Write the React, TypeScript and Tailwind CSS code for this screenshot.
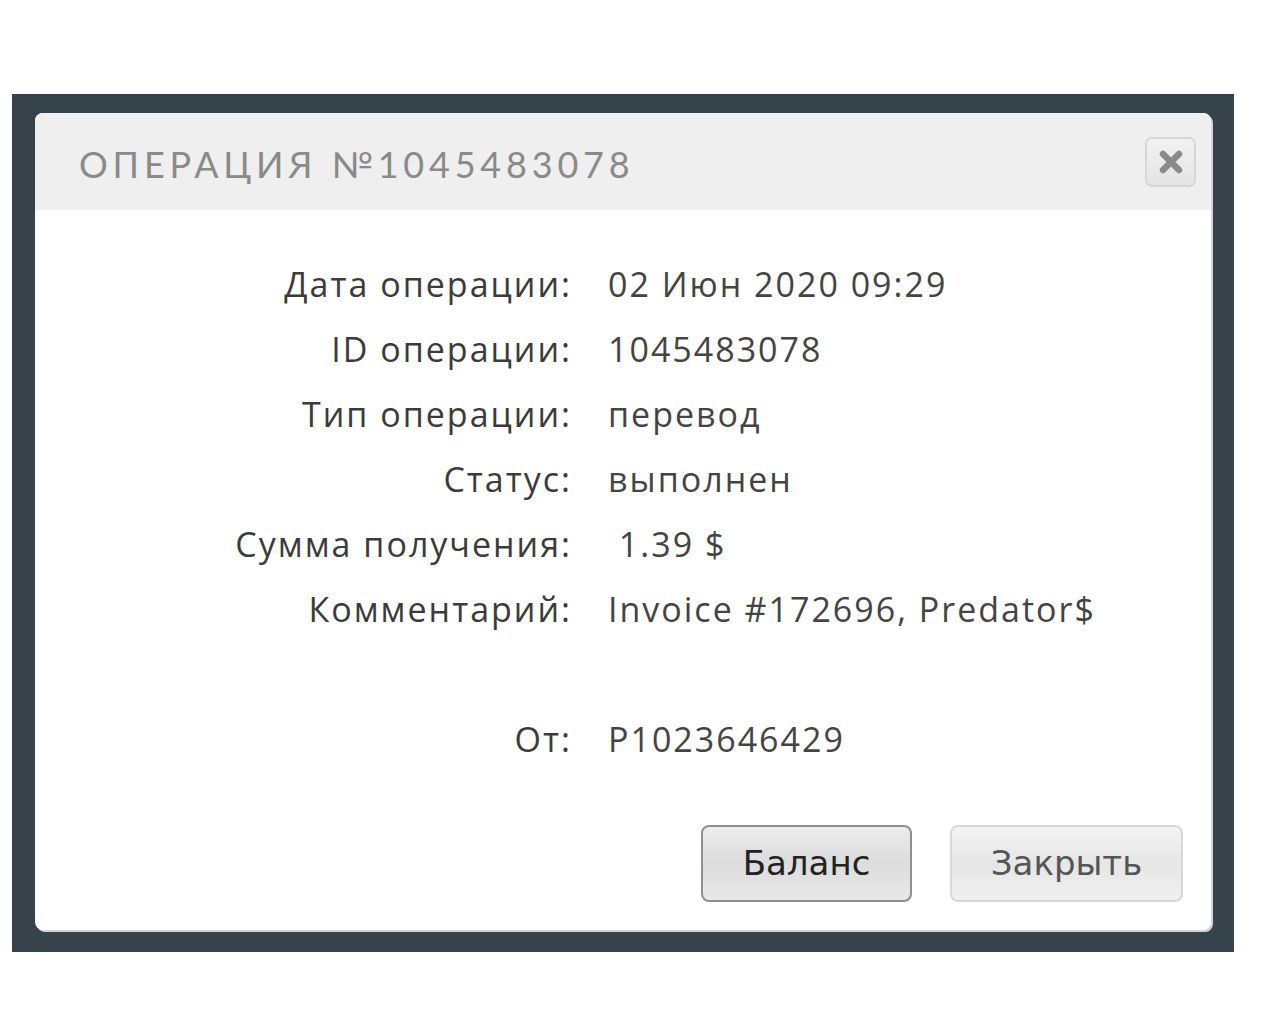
import React from "react";

const rows: Array<[string, string]> = [
  ["Дата операции:", "02 Июн 2020 09:29"],
  ["ID операции:", "1045483078"],
  ["Тип операции:", "перевод"],
  ["Статус:", "выполнен"],
  ["Сумма получения:", "\u00a01.39 $"],
  ["Комментарий:", "Invoice #172696, Predator$"],
  ["", ""],
  ["От:", "P1023646429"],
];

function CloseIcon() {
  return (
    <svg width="26" height="26" viewBox="0 0 26 26">
      <path d="M5 5 L21 21 M21 5 L5 21" stroke="#8a8a8a" strokeWidth="6.5" strokeLinecap="round" />
    </svg>
  );
}

export default function App() {
  return (
    <div className="w-full h-[1024px] bg-white pt-[94px] pl-[12px]">
      <div className="w-[1222px] h-[858px] bg-[#37434a] pt-[19px] pl-[23px]">
        <div className="w-[1176px] h-[817px] bg-white rounded-[8px] overflow-hidden shadow-[2px_2px_0_#d4d4d4] flex flex-col">
          {/* header */}
          <div className="h-[97px] bg-[#efefef] flex items-center justify-between pl-[44px] pr-[15px]">
            <div className="text-[36px] tracking-[4.8px] text-[#8a8a8a] pt-[4px]" style={{ fontFamily: "Lato, 'Noto Sans', sans-serif" }}>
              ОПЕРАЦИЯ №1045483078
            </div>
            <button className="w-[51px] h-[50px] rounded-[7px] border-2 border-[#d6d6d6] bg-gradient-to-b from-[#f2f2f2] to-[#e4e4e4] flex items-center justify-center">
              <CloseIcon />
            </button>
          </div>

          {/* body */}
          <div
            className="grid grid-cols-[535px_1fr] gap-x-[38px] pt-[42px] text-[34px] tracking-[2px] leading-[65px]"
            style={{ fontFamily: "'Open Sans', 'Noto Sans', sans-serif" }}
          >
            {rows.map(([label, value], i) => (
              <React.Fragment key={i}>
                <div className="text-right text-[#3b3b3b] h-[65px] -mr-[2px]">{label}</div>
                <div className="text-[#444] h-[65px] whitespace-pre">{value}</div>
              </React.Fragment>
            ))}
          </div>

          {/* footer */}
          <div className="flex justify-end gap-[38px] pr-[28px] mt-auto mb-[28px]" style={{ fontFamily: "'DejaVu Sans', sans-serif" }}>
            <button className="w-[211px] h-[77px] rounded-[8px] border-2 border-[#8f8f8f] bg-gradient-to-b from-[#ececec] via-[#dcdcdc] to-[#e8e8e8] text-[34px] text-[#222]">
              Баланс
            </button>
            <button className="w-[233px] h-[77px] rounded-[8px] border-2 border-[#d8d8d8] bg-gradient-to-b from-[#f4f4f4] via-[#e6e6e6] to-[#f0f0f0] text-[34px] text-[#555]">
              Закрыть
            </button>
          </div>
        </div>
      </div>
    </div>
  );
}
